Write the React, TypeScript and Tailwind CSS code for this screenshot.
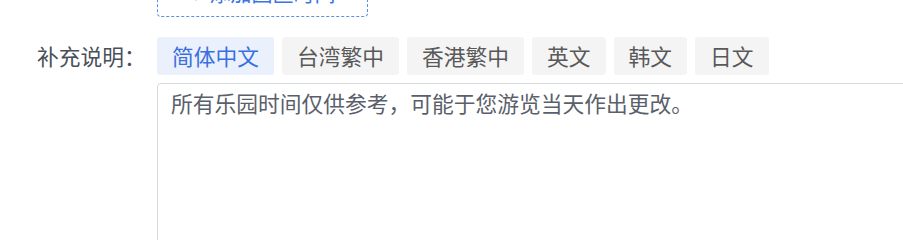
import React from "react";

const tags = ["简体中文", "台湾繁中", "香港繁中", "英文", "韩文", "日文"];

export default function App() {
  return (
    <div
      className="w-[903px] h-[240px] overflow-hidden bg-white relative"
      style={{ fontFamily: '"Microsoft YaHei", "Noto Sans CJK SC", "Noto Sans", sans-serif' }}
    >
      <div className="flex flex-col mt-[-31px]">
        <div className="flex">
          <div className="w-[157px] shrink-0" />
          <div className="w-[211px] h-[48px] border border-dashed border-[#5b8def] rounded-[4px] flex items-center justify-center gap-[8px] text-[#3b74e6] text-[21px]">
            <span className="text-[22px] leading-none">+</span>
            <span>添加园区时间</span>
          </div>
        </div>
        <div className="flex mt-[20px]">
          <div className="w-[157px] shrink-0 pl-[37px] h-[38px] flex items-center text-[21.75px] text-[#4a4f5c]">
            补充说明：
          </div>
          <div className="flex flex-col">
            <div className="flex gap-[8px]">
              {tags.map((t, i) => (
                <div
                  key={t}
                  className={
                    i === 0
                      ? "h-[38px] px-[15px] flex items-center rounded-[3px] text-[21.75px] bg-[#ebf1fc] text-[#3a6fe0]"
                      : "h-[38px] px-[15px] flex items-center rounded-[3px] text-[21.75px] bg-[#f4f4f5] text-[#595959]"
                  }
                >
                  {t}
                </div>
              ))}
            </div>
            <div className="mt-[8px] w-[760px] h-[200px] border border-[#d6d9e0] rounded-[4px] px-[13px] pt-[3px] text-[21.75px] leading-[32px] text-[#5a5f6b]">
              所有乐园时间仅供参考，可能于您游览当天作出更改。
            </div>
          </div>
        </div>
      </div>
    </div>
  );
}
